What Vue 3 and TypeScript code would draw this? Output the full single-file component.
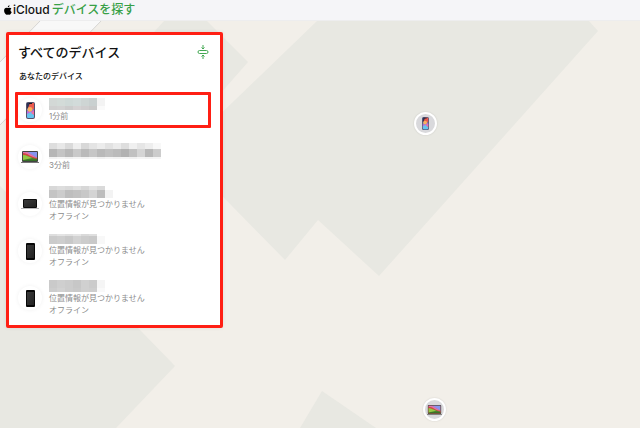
<script setup lang="ts">
import { ref } from 'vue'

type Kind = 'phone' | 'laptop'

interface Device {
  id: number
  kind: Kind
  online: boolean
  status: string[]
  // Shades of the masked name, one array per row of cells, with row heights
  mask: { height: number; cells: string[] }[]
}

const none = 'transparent'

const devices: Device[] = [
  {
    id: 1,
    kind: 'phone',
    online: true,
    status: ['1分前'],
    mask: [
      { height: 8, cells: ['#d3d8d6', '#d3dbd8', '#cfd9d7', '#d2dbda', '#ced5d4', '#c9d0d0', '#f3f3f3'] },
      { height: 4, cells: ['#d0d0d0', '#d2d2d2', '#cccccc', '#d5d2d3', '#d0cecf', '#cacaca', '#fafafa'] },
    ],
  },
  {
    id: 2,
    kind: 'laptop',
    online: true,
    status: ['3分前'],
    mask: [
      { height: 6, cells: ['#dedede', '#e8e8e8', '#dadada', '#eeeeee', '#d8d8d8', '#e4e4e4', '#ececec', '#e2e2e2', '#ebebeb', '#dedede', '#f0f0f0', '#e6e6e6', '#eeeeee', '#f8f8f8'] },
      { height: 8, cells: ['#b6b6b6', '#c4c4c4', '#b8b8b8', '#c9c9c9', '#bababa', '#c6c6c6', '#b9b9b9', '#c0c0c0', '#bbbbbb', '#b2b2b2', '#c1c1c1', '#d5d5d5', '#b8b8b8', '#cccccc'] },
      { height: 2, cells: ['#f2f2f2', '#f5f5f5', '#f1f1f1', '#f4f4f4', '#f2f2f2', '#f5f5f5', '#f0f0f0', '#f4f4f4', '#f2f2f2', '#f4f4f4', '#f1f1f1', '#f5f5f5', '#f3f3f3', '#f5f5f5'] },
    ],
  },
  {
    id: 3,
    kind: 'laptop',
    online: false,
    status: ['位置情報が見つかりません', 'オフライン'],
    mask: [
      { height: 4, cells: ['#d8d8d8', '#dddddd', '#d9d9d9', '#e0e0e0', '#d7d7d7', '#e2e2e2', '#dadada', none] },
      { height: 8, cells: ['#c4c4c4', '#cccccc', '#bebebe', '#c2c2c2', '#c8c8c8', '#d4d4d4', '#bdbdbd', '#f3f3f3'] },
    ],
  },
  {
    id: 4,
    kind: 'phone',
    online: false,
    status: ['位置情報が見つかりません', 'オフライン'],
    mask: [
      { height: 2, cells: ['#dedede', '#e4e4e4', '#e0e0e0', '#e6e6e6', '#dadada', '#dfdfdf', none] },
      { height: 8, cells: ['#cbcbcb', '#cecece', '#c8c8c8', '#d2d2d2', '#cccccc', '#c9c9c9', '#f8f8f8'] },
    ],
  },
  {
    id: 5,
    kind: 'phone',
    online: false,
    status: ['位置情報が見つかりません', 'オフライン'],
    mask: [
      { height: 8, cells: ['#cacaca', '#cfcfcf', '#cccccc', '#c7c7c7', '#d0d0d0', '#cbcbcb', '#f5f5f5'] },
      { height: 4, cells: ['#cdcdcd', '#d2d2d2', '#cccccc', '#c9c9c9', '#d0d0d0', '#cecece', '#f9f9f9'] },
    ],
  },
]

const selected = ref(1)
const collapsed = ref(false)
</script>

<template>
  <div class="app">
    <svg class="defs" aria-hidden="true">
      <defs>
        <linearGradient id="dark" x1="0" y1="0" x2="1" y2="1">
          <stop offset="0" stop-color="#3a3a3a" />
          <stop offset="1" stop-color="#222" />
        </linearGradient>
        <linearGradient id="hill" x1="0" y1="0" x2="0" y2="1">
          <stop offset="0" stop-color="#79a83a" />
          <stop offset="1" stop-color="#2f6a25" />
        </linearGradient>
        <symbol id="phone-on" viewBox="0 0 9 17">
          <rect width="9" height="17" rx="2" fill="#55506a" />
          <rect x="1" y="1" width="7" height="15" rx="1" fill="#5b7fd0" />
          <path d="M1 1h3v4l-3 2z" fill="#2b3355" />
          <path d="M4 1h4v6L5 8 2 6z" fill="#ea5a4e" />
          <circle cx="4" cy="7.500" r="2.500" fill="#fbb05c" />
          <path d="M1 9l3 1 4-2v3l-7 1z" fill="#c766dc" />
          <path d="M1 12l4-2 3 3v2l-1 1H2l-1-1z" fill="#66c4ee" />
          <path d="M5 11l3-2v4z" fill="#f7709f" />
          <rect x="3" y="1" width="3" height="1" fill="#1b1b22" />
        </symbol>
        <symbol id="laptop-on" viewBox="0 0 18 12">
          <rect x="1" width="16" height="11" rx="1" fill="#444" />
          <rect x="2" y="1" width="14" height="9" fill="#e5695c" />
          <path d="M6 1h10v6z" fill="#8793f0" />
          <path d="M2 1h4l10 6v1L2 3z" fill="#df74b0" />
          <path d="M2 2c5 0 7 4 14 5v3H2z" fill="#d2473f" />
          <path d="M2 4c4 0 8 3 14 4v2H2z" fill="url(#hill)" />
          <path d="M2 4c3 0 6 2 9 3l-9 2z" fill="#94c845" />
          <rect y="11" width="18" height="1" fill="#777" />
        </symbol>
        <symbol id="phone-off" viewBox="0 0 9 17">
          <rect width="9" height="17" rx="1" fill="#080808" />
          <rect x="1" y="2" width="7" height="13" fill="url(#dark)" />
        </symbol>
        <symbol id="laptop-off" viewBox="0 0 18 12">
          <rect x="2" y="1" width="14" height="9" rx="1" fill="#0c0c0c" />
          <rect x="3" y="2" width="12" height="7" fill="url(#dark)" />
          <rect y="10" width="18" height="1" fill="#b9b9bb" />
        </symbol>
      </defs>
    </svg>

    <header class="bar">
      <svg class="apple" viewBox="0 0 16 19" aria-hidden="true">
        <path d="M11.100 0c.2 1.200-.3 2.300-1 3.100-.7.800-1.700 1.400-2.700 1.300-.1-1.100.4-2.200 1-2.900C9.100.7 10.200.1 11.100 0zM14.800 6.600c-1.100.7-1.900 1.700-1.900 3.200 0 1.800 1.100 3 2.600 3.600-.5 1.500-1.300 2.900-2.300 4.100-.7.900-1.400 1.400-2.400 1.400s-1.500-.6-2.700-.6-1.800.6-2.800.6c-.9 0-1.600-.6-2.300-1.400C1.300 15.600.2 12.900.2 10.300c0-3.500 2.200-5.400 4.400-5.400 1.300 0 2.400.8 3.200.8s2.100-.9 3.600-.8c1.400 0 2.600.6 3.400 1.700z" />
      </svg>
      <h1 class="brand"><span class="cloud">iCloud</span><span class="find">デバイスを探す</span></h1>
    </header>

    <main class="map">
      <svg class="terrain" viewBox="0 0 640 407" preserveAspectRatio="xMinYMin slice" aria-hidden="true">
        <rect width="640" height="407" fill="#f2efe9" />
        <path d="M-1 42 41-1H102L-1 105z" fill="#f8f8f8" stroke="#d6d5d3" />
        <g fill="#e8e8e2">
          <path d="M164 0H207L248 41 205 90 110 60z" />
          <path d="M317 0H589L598 10 379 255 318 199 285 239 180 132z" />
          <path d="M0 165 175 345 116 407H0z" />
          <path d="M322 370 376 407H300z" />
        </g>
      </svg>

      <button class="pin pin-phone" type="button" aria-label="iPhone">
        <svg class="pin-phone-icon"><use href="#phone-on" /></svg>
      </button>
      <button class="pin pin-laptop" type="button" aria-label="MacBook">
        <svg class="pin-laptop-icon"><use href="#laptop-on" /></svg>
      </button>

      <section class="panel">
        <div class="head">
          <h2 class="title">すべてのデバイス</h2>
          <button class="toggle" type="button" aria-label="表示を切り替える" @click="collapsed = !collapsed">
            <svg viewBox="0 0 12 14" aria-hidden="true">
              <rect x="1" y="5.500" width="10" height="3" rx="1.500" />
              <path d="M6 0v4M4.500 2.500 6 4 7.500 2.500M6 14v-4M4.500 11.500 6 10 7.500 11.500" />
            </svg>
          </button>
        </div>
        <h3 class="group">あなたのデバイス</h3>
        <ul v-show="!collapsed" class="list">
          <li v-for="d in devices" :key="d.id">
            <button class="device" :class="{ selected: selected === d.id }" type="button" @click="selected = d.id">
              <span class="disc">
                <svg :class="d.kind" aria-hidden="true"><use :href="`#${d.kind}-${d.online ? 'on' : 'off'}`" /></svg>
              </span>
              <span class="info">
                <span class="mask">
                  <span v-for="(row, r) in d.mask" :key="r" class="mask-row" :style="{ height: `${row.height}px` }">
                    <span v-for="(c, i) in row.cells" :key="i" class="cell" :style="{ background: c }"></span>
                  </span>
                </span>
                <span v-for="s in d.status" :key="s" class="status">{{ s }}</span>
              </span>
            </button>
          </li>
        </ul>
      </section>
    </main>
  </div>
</template>

<style>
body {
  margin: 0;
}
</style>

<style scoped>
.app {
  display: flex;
  flex-direction: column;
  min-height: 100vh;
  font-family: Inter, "Noto Sans CJK JP", sans-serif;
  color: #111;
}
.defs {
  position: absolute;
  width: 0;
  height: 0;
}
button {
  padding: 0;
  border: 0;
  background: none;
  font: inherit;
  color: inherit;
  cursor: pointer;
}
h1,
h2,
h3 {
  margin: 0;
}
.bar {
  display: flex;
  align-items: center;
  gap: 1px;
  height: 21px;
  padding: 0 4px;
  box-sizing: border-box;
  background: #f5f5f8;
  border-bottom: 1px solid #ededee;
}
.apple {
  width: 8px;
  height: 10px;
}
.brand {
  display: flex;
  align-items: center;
  gap: 2px;
  font-size: 12px;
  line-height: 18px;
  white-space: nowrap;
}
.cloud {
  font-weight: 500;
}
.find {
  font-weight: 500;
  color: #38a047;
}
.map {
  position: relative;
  flex: 1;
  display: flex;
  align-items: flex-start;
  padding: 11px 6px;
  background: #f2efe9;
  overflow: hidden;
}
.terrain {
  position: absolute;
  inset: 0;
  width: 100%;
  height: 100%;
}
.pin {
  position: absolute;
  display: grid;
  place-items: center;
  width: 23px;
  height: 23px;
  box-sizing: border-box;
  border: 2px solid #fff;
  border-radius: 50%;
  background: #d9d9dc;
  box-shadow: 0 0 2px #0002;
}
.pin-phone {
  left: 414px;
  top: 91px;
}
.pin-laptop {
  left: 423px;
  top: 377px;
}
.pin-phone-icon {
  width: 7px;
  height: 13px;
}
.pin-laptop-icon {
  width: 15px;
  height: 10px;
}
.panel {
  position: relative;
  width: 217px;
  box-sizing: border-box;
  padding: 8px 9px 9px 6px;
  border: 3px solid #ff1f14;
  border-radius: 2px;
  background: #fff;
  box-shadow: 0 0 4px #0001;
}
.head {
  display: flex;
  align-items: center;
  justify-content: space-between;
  padding: 0 2px 0 3px;
}
.title {
  font-size: 13px;
  line-height: 18px;
  font-weight: 500;
}
.toggle {
  display: grid;
  width: 12px;
  height: 14px;
}
.toggle svg {
  width: 12px;
  height: 14px;
  fill: none;
  stroke: #43a852;
}
.group {
  padding: 9px 4px 10px;
  font-size: 8px;
  line-height: 12px;
  font-weight: 500;
}
.list {
  display: grid;
  gap: 11px;
  margin: 0;
  padding: 0;
  list-style: none;
}
.device {
  display: flex;
  align-items: center;
  gap: 7px;
  width: 100%;
  height: 36px;
  box-sizing: border-box;
  padding: 0 3px;
  border-radius: 1px;
  text-align: left;
}
.selected {
  box-shadow: inset 0 0 0 3px #ff1f14;
}
.disc {
  display: grid;
  place-items: center;
  width: 24px;
  height: 24px;
  border-radius: 50%;
  box-shadow: 0 0 4px #0000000f;
}
.phone {
  width: 9px;
  height: 17px;
}
.laptop {
  width: 18px;
  height: 12px;
}
.info {
  display: flex;
  flex-direction: column;
}
.mask-row {
  display: flex;
}
.cell {
  width: 8px;
}
.status {
  font-size: 8px;
  line-height: 12px;
  color: #8b8b8b;
  white-space: nowrap;
}
</style>
